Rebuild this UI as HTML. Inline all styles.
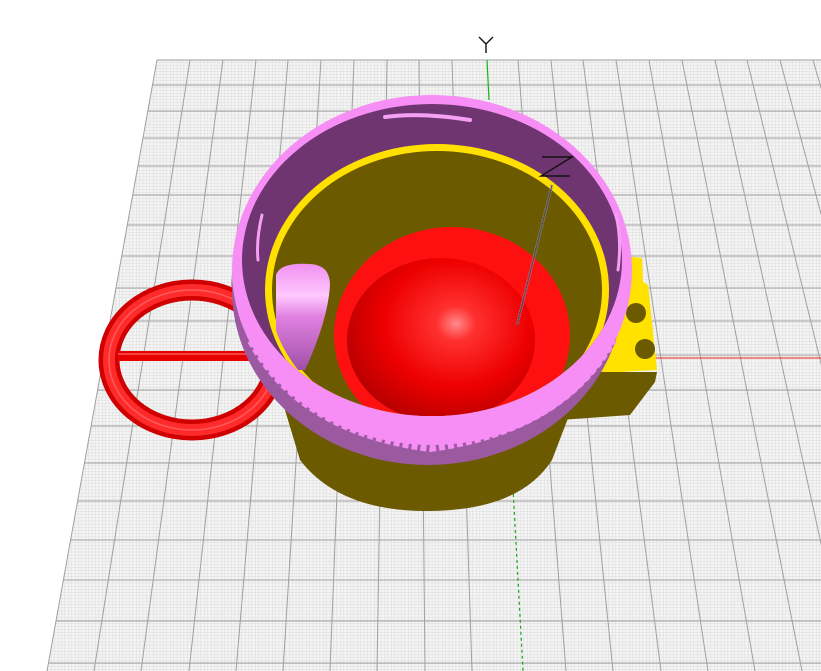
<!DOCTYPE html>
<html><head><meta charset="utf-8"><style>html,body{margin:0;padding:0;background:#fff;width:821px;height:671px;overflow:hidden}</style></head><body>
<svg width="821" height="671" viewBox="0 0 821 671" xmlns="http://www.w3.org/2000/svg" style="display:block">
<defs>
<pattern id="mg" width="3.4" height="3.1" patternUnits="userSpaceOnUse"><rect width="3.4" height="3.1" fill="#f4f4f4"/><path d="M0 0H3.4M0 0V3.1" stroke="#d8d8d8" stroke-width="0.8"/></pattern>
<radialGradient id="sph" cx="0.58" cy="0.4" r="0.7"><stop offset="0" stop-color="#ff8a8a"/><stop offset="0.15" stop-color="#ff3030"/><stop offset="0.55" stop-color="#ee0000"/><stop offset="1" stop-color="#a80000"/></radialGradient>
<linearGradient id="pk" x1="0" y1="0" x2="0" y2="1"><stop offset="0" stop-color="#f090f0"/><stop offset="0.3" stop-color="#ffc8ff"/><stop offset="0.5" stop-color="#e080e0"/><stop offset="1" stop-color="#a050a8"/></linearGradient>
<clipPath id="inner"><ellipse cx="432" cy="260" rx="190" ry="156"/></clipPath>
<clipPath id="inner2"><ellipse cx="437" cy="290" rx="168" ry="142"/></clipPath>
</defs>
<polygon points="157,60 821,60 821,671 47,671" fill="url(#mg)"/>
<g stroke="#a0a0a0" stroke-width="1" fill="none">
<line x1="157" y1="60" x2="47" y2="671"/><line x1="190" y1="60" x2="94" y2="671"/><line x1="223" y1="60" x2="141" y2="671"/><line x1="256" y1="60" x2="189" y2="671"/><line x1="288" y1="60" x2="236" y2="671"/><line x1="321" y1="60" x2="283" y2="671"/><line x1="354" y1="60" x2="330" y2="671"/><line x1="387" y1="60" x2="377" y2="671"/><line x1="419" y1="60" x2="425" y2="671"/><line x1="452" y1="60" x2="472" y2="671"/><line x1="518" y1="60" x2="566" y2="671"/><line x1="551" y1="60" x2="613" y2="671"/><line x1="583" y1="60" x2="661" y2="671"/><line x1="616" y1="60" x2="708" y2="671"/><line x1="649" y1="60" x2="755" y2="671"/><line x1="682" y1="60" x2="802" y2="671"/><line x1="715" y1="60" x2="849" y2="671"/><line x1="747" y1="60" x2="896" y2="671"/><line x1="780" y1="60" x2="943" y2="671"/><line x1="813" y1="60" x2="990" y2="671"/>
<line x1="157" y1="60" x2="821" y2="60"/><line x1="152" y1="85" x2="821" y2="85"/><line x1="148" y1="111" x2="821" y2="111"/><line x1="143" y1="138" x2="821" y2="138"/><line x1="138" y1="166" x2="821" y2="166"/><line x1="133" y1="195" x2="821" y2="195"/><line x1="127" y1="225" x2="821" y2="225"/><line x1="122" y1="256" x2="821" y2="256"/><line x1="116" y1="288" x2="821" y2="288"/><line x1="110" y1="321" x2="821" y2="321"/><line x1="104" y1="355" x2="821" y2="355"/><line x1="98" y1="390" x2="821" y2="390"/><line x1="91" y1="426" x2="821" y2="426"/><line x1="85" y1="463" x2="821" y2="463"/><line x1="78" y1="501" x2="821" y2="501"/><line x1="71" y1="540" x2="821" y2="540"/><line x1="63" y1="580" x2="821" y2="580"/><line x1="56" y1="621" x2="821" y2="621"/><line x1="48" y1="663" x2="821" y2="663"/>
</g>
<line x1="487" y1="60" x2="489" y2="100" stroke="#11bb11" stroke-width="1.2"/>
<line x1="512" y1="470" x2="523" y2="671" stroke="#11aa11" stroke-width="1.2" stroke-dasharray="3,3"/>
<line x1="615" y1="358" x2="821" y2="358" stroke="#ee2222" stroke-width="1"/>
<path d="M479 37 L486 44 L493 37 M486 44 V53" stroke="#111" stroke-width="1.4" fill="none"/>
<!-- handle -->
<ellipse cx="192" cy="360" rx="83" ry="70" fill="none" stroke="#d00000" stroke-width="21"/>
<ellipse cx="192" cy="360" rx="83" ry="70" fill="none" stroke="#ff2a2a" stroke-width="12"/>
<ellipse cx="192" cy="360" rx="83" ry="70" fill="none" stroke="#ff7070" stroke-width="1.5" opacity="0.7"/>
<rect x="118" y="351" width="160" height="10" fill="#e80000"/>
<rect x="118" y="353" width="160" height="2" fill="#ff6060" opacity="0.7"/>
<!-- yellow block -->
<polygon points="615,255 642,258 643,282 648,285 657,370 600,373 560,420" fill="#ffe200"/>
<polygon points="600,372 657,372 655,382 630,415 560,420" fill="#6b5a00"/>
<circle cx="645" cy="349" r="10" fill="#6b5a00"/><circle cx="636" cy="313" r="10" fill="#6b5a00"/>
<!-- cup body -->
<path d="M282 400 L300 460 Q340 512 430 511 Q520 510 552 460 L575 400 Z" fill="#6b5a00"/>
<ellipse cx="428" cy="290" rx="196" ry="175" fill="#9b5aa0"/>
<ellipse cx="432" cy="270" rx="200" ry="175" fill="#f78ef5"/>
<path d="M252 340 Q300 430 430 447 Q560 430 612 340" fill="none" stroke="#f78ef5" stroke-width="10" stroke-dasharray="6,3"/>
<ellipse cx="432" cy="260" rx="190" ry="156" fill="#6e3570"/>
<path d="M385 117 Q420 112 470 120" stroke="#f5a0f5" stroke-width="4" fill="none" stroke-linecap="round"/>
<path d="M616 215 Q622 240 618 270" stroke="#f5a0f5" stroke-width="3" fill="none" stroke-linecap="round"/>
<path d="M262 215 Q256 240 258 260" stroke="#f5a0f5" stroke-width="3" fill="none" stroke-linecap="round"/>
<g clip-path="url(#inner)">
<ellipse cx="437" cy="290" rx="172" ry="146" fill="#ffe000"/>
<ellipse cx="437" cy="290" rx="165" ry="139" fill="#6b5a00"/>
<g clip-path="url(#inner2)">
<ellipse cx="452" cy="335" rx="118" ry="108" fill="#ff1010"/>
<ellipse cx="441" cy="340" rx="94" ry="82" fill="url(#sph)"/>
<path d="M276 275 Q280 262 310 264 Q330 265 330 285 Q328 320 305 370 L276 370 Z" fill="url(#pk)"/>
</g>
</g>
<!-- Z axis -->
<line x1="552" y1="185" x2="517" y2="325" stroke="#8a8aa8" stroke-width="3" stroke-dasharray="1,1"/>
<line x1="552" y1="185" x2="517" y2="325" stroke="#445" stroke-width="0.8"/>
<path d="M542 157 H572 L541 176 H570" stroke="#111" stroke-width="1.4" fill="none"/>
</svg>
</body></html>
